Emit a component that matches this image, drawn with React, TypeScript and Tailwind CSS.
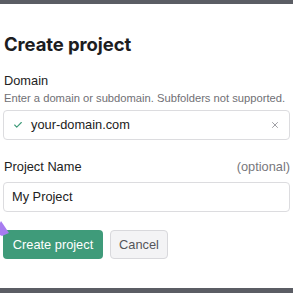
import { X, Check } from "lucide-react";

export default function App() {
  return (
    <div className="w-[293px] h-[293px] bg-white flex flex-col overflow-hidden relative font-['Liberation_Sans',sans-serif]">
      <div className="h-[4px] bg-[#5b5d64] shrink-0" />

      <div className="flex-1 flex flex-col px-[3px]">
        {/* Titel */}
        <h1 className="mt-[26px] pl-[1px] text-[18.5px] leading-[28px] font-bold text-[#1d1d1f] font-['Inter',sans-serif] tracking-[-0.1px]">
          Create project
        </h1>

        <label className="mt-[14px] pl-[1px] text-[12.8px] leading-[18px] text-[#222]">Domain</label>
        <p className="pl-[1px] text-[11.2px] leading-[16px] text-[#707075] whitespace-nowrap">
          Enter a domain or subdomain. Subfolders not supported.
        </p>

        <div className="mt-[4px] h-[30px] flex items-center border border-[#dcdcdf] rounded-[4px] pl-[9px] pr-[9px] gap-[8px]">
          <Check size={10} strokeWidth={2.6} className="text-[#3d9a78]" />
          <span className="flex-1 text-[12.8px] text-[#222]">your-domain.com</span>
          <X size={10} strokeWidth={2.4} className="text-[#a0a0a5]" />
        </div>

        <div className="mt-[18px] flex items-center justify-between h-[18px]">
          <span className="pl-[1px] text-[12.8px] text-[#222]">Project Name</span>
          <span className="text-[12.8px] text-[#77777c]">(optional)</span>
        </div>

        <div className="mt-[6px] h-[30px] flex items-center border border-[#dcdcdf] rounded-[4px] px-[8px]">
          <span className="text-[12.8px] text-[#222]">My Project</span>
        </div>

        <div className="mt-[18px] flex gap-[7px]">
          <button className="h-[29px] w-[100px] rounded-[4px] bg-[#3f9b7a] text-white text-[12.8px]">
            Create project
          </button>
          <button className="h-[29px] w-[58px] rounded-[4px] bg-[#f3f3f5] border border-[#d8d8dc] text-[#55555a] text-[12.8px]">
            Cancel
          </button>
        </div>
      </div>

      <div className="h-[5px] bg-[#5b5d64] shrink-0" />

      {/* Cursor */}
      <svg className="absolute left-0 top-[221px]" width="10" height="16" viewBox="0 0 10 16">
        <path d="M1 0 L9 12 L2 15 L0 14 L0 2 Z" fill="#a77cf0" />
      </svg>
    </div>
  );
}
